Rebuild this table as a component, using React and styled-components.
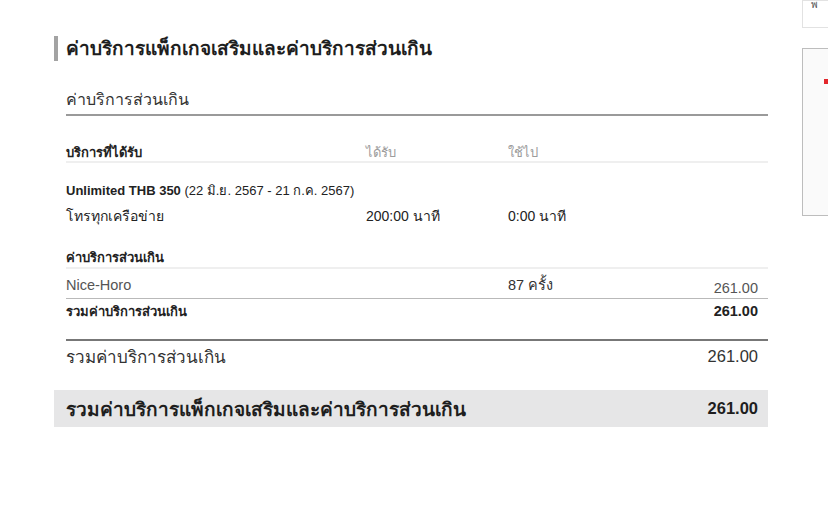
import React from 'react';
import styled, { createGlobalStyle } from 'styled-components';

const GlobalStyle = createGlobalStyle`
  body {
    margin: 0;
    background: #fff;
    font-family: "Liberation Sans", "Noto Sans", "DejaVu Sans", sans-serif;
    color: #222;
  }
`;

const Page = styled.div`
  display: flex;
  align-items: flex-start;
  width: 828px;
  height: 510px;
  overflow: hidden;
`;

const Main = styled.main`
  flex-shrink: 0;
  width: 714px;
  margin-left: 54px;
  padding-top: 36px;
`;

const Title = styled.h2`
  margin: 0;
  border-left: 4px solid #a3a3a3;
  padding-left: 8px;
  height: 25px;
  line-height: 25px;
  font-size: 19px;
  font-weight: bold;
  color: #1e1e1e;
`;

const Section = styled.div`
  margin-left: 12px;
`;

const Subtitle = styled.h3`
  margin: 28px 0 0;
  padding-bottom: 3px;
  border-bottom: 2px solid #9a9a9a;
  font-size: 16px;
  font-weight: normal;
  line-height: 22px;
  color: #333;
`;

const Row = styled.div`
  display: grid;
  grid-template-columns: 300px 142px 1fr auto;
  align-items: center;
  padding-right: 10px;
  padding-top: ${(p) => p.$pt || 0}px;
  box-sizing: border-box;
  height: ${(p) => p.$h || 22}px;
  margin-top: ${(p) => p.$mt || 0}px;
  border-bottom: ${(p) => p.$line || 'none'};
  font-size: ${(p) => p.$size || 13}px;
  color: ${(p) => p.$color || '#222'};
`;

const Cell = styled.span`
  font-weight: ${(p) => (p.$bold ? 'bold' : 'normal')};
  color: ${(p) => p.$color || 'inherit'};
  font-size: ${(p) => (p.$size ? `${p.$size}px` : 'inherit')};
  text-align: ${(p) => (p.$right ? 'right' : 'left')};
  padding-top: ${(p) => p.$drop || 0}px;
  white-space: nowrap;
`;

const Strong = styled.b`
  font-weight: bold;
`;

const Total = styled.div`
  display: flex;
  justify-content: space-between;
  align-items: center;
  margin-top: 16px;
  border-top: 2px solid #777;
  height: 30px;
  padding: 0 10px 0 0;
  font-size: 17px;
  color: #333;
`;

const GrandTotal = styled.div`
  display: flex;
  justify-content: space-between;
  align-items: center;
  margin-top: 19px;
  height: 37px;
  padding: 0 10px 0 12px;
  background: #e6e6e7;
  font-size: 19px;
  font-weight: bold;
  color: #1e1e1e;
`;

const Amount = styled.span`
  font-size: 16.5px;
`;

const Side = styled.aside`
  display: flex;
  flex-direction: column;
  gap: 20px;
  margin-left: 34px;
  flex: 1;
  min-width: 0;
`;

const SideBox = styled.div`
  height: ${(p) => p.$h}px;
  border: 1px solid ${(p) => p.$border};
  border-right: none;
  background: ${(p) => p.$bg || '#fff'};
  padding: ${(p) => p.$pad || '0'};
  font-size: 10px;
  color: #555;
  box-sizing: border-box;
  overflow: hidden;
`;

const RedMark = styled.div`
  width: 6px;
  height: 5px;
  margin: 30px 0 0 21px;
  background: #e3262b;
`;

export default function App() {
  return (
    <Page>
      <GlobalStyle />
      <Main>
        <Title>ค่าบริการแพ็กเกจเสริมและค่าบริการส่วนเกิน</Title>
        <Section>
          <Subtitle>ค่าบริการส่วนเกิน</Subtitle>
          <Row $mt={26} $h={21} $line="2px solid #efefef">
            <Cell $bold>บริการที่ได้รับ</Cell>
            <Cell $color="#9c9c9c">ได้รับ</Cell>
            <Cell $color="#9c9c9c">ใช้ไป</Cell>
            <Cell />
          </Row>
          <Row $mt={16} $size={13}>
            <Cell>
              <Strong>Unlimited THB 350</Strong> (22 มิ.ย. 2567 - 21 ก.ค. 2567)
            </Cell>
          </Row>
          <Row $mt={2} $size={14} $h={26}>
            <Cell>โทรทุกเครือข่าย</Cell>
            <Cell>200:00 นาที</Cell>
            <Cell>0:00 นาที</Cell>
            <Cell />
          </Row>
          <Row $mt={18} $h={22} $line="2px solid #efefef">
            <Cell $bold>ค่าบริการส่วนเกิน</Cell>
          </Row>
          <Row $h={30} $pt={2} $size={14.5} $line="1px solid #b9b9b9" $color="#555">
            <Cell>Nice-Horo</Cell>
            <Cell />
            <Cell $color="#333">87 ครั้ง</Cell>
            <Cell $right $drop={6}>261.00</Cell>
          </Row>
          <Row $h={24}>
            <Cell $bold>รวมค่าบริการส่วนเกิน</Cell>
            <Cell />
            <Cell />
            <Cell $bold $right $size={14.5}>261.00</Cell>
          </Row>
          <Total>
            <span>รวมค่าบริการส่วนเกิน</span>
            <Amount>261.00</Amount>
          </Total>
        </Section>
        <GrandTotal>
          <span>รวมค่าบริการแพ็กเกจเสริมและค่าบริการส่วนเกิน</span>
          <Amount>261.00</Amount>
        </GrandTotal>
      </Main>
      <Side>
        <SideBox $h={28} $border="#e2e2e2" $pad="0 0 0 8px">
          <div style={{ marginTop: -4 }}>พ</div>
        </SideBox>
        <SideBox $h={168} $border="#bdbdbd" $bg="#fafafa">
          <RedMark />
        </SideBox>
      </Side>
    </Page>
  );
}
